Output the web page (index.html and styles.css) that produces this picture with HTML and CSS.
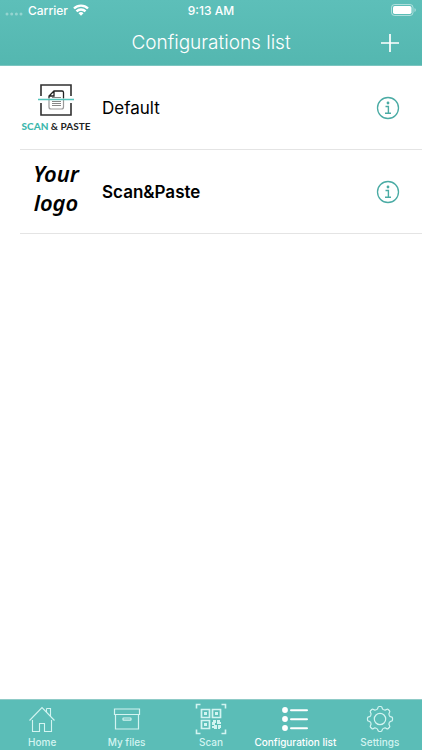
FILE: index.html
```html
<!DOCTYPE html>
<html lang="en">
<head>
<meta charset="utf-8">
<meta name="viewport" content="width=device-width, initial-scale=1">
<title>Configurations list</title>
<link rel="stylesheet" href="styles.css">
</head>
<body>
<header class="header">
  <div class="status">
    <div class="status-left">
      <svg class="signal" width="18" height="6" viewBox="0 0 18 6" aria-hidden="true"><g fill="#fff" opacity=".35"><circle cx="2" cy="2" r="1.5"/><circle cx="6.700" cy="2" r="1.5"/><circle cx="11.400" cy="2" r="1.5"/><circle cx="16" cy="2" r="1.5"/></g></svg>
      <span>Carrier</span>
      <svg width="16" height="12" viewBox="0 0 16 12" fill="none" stroke="#fff" stroke-width="2.400" aria-hidden="true"><path d="M1 4.500a10 10 0 0 1 14 0M3.500 7.400a6.400 6.400 0 0 1 9 0"/><path d="M8 11.800 5.500 9.300a3.600 3.600 0 0 1 5 0z" fill="#fff" stroke="none"/></svg>
    </div>
    <span class="time">9:13 AM</span>
    <div class="status-right">
      <svg width="26" height="12" viewBox="0 0 26 12" aria-hidden="true"><rect x=".5" y=".5" width="21.500" height="11" rx="3" fill="none" stroke="#fff" stroke-opacity=".5"/><rect x="2" y="2" width="18.500" height="8" rx="1.700" fill="#fff"/><path d="M23.500 4v4q1.300-.6 1.300-2t-1.300-2z" fill="#fff" opacity=".5"/></svg>
    </div>
  </div>
  <div class="titlebar">
    <h1>Configurations list</h1>
    <button class="add" type="button" aria-label="Add configuration">
      <svg width="20" height="20" viewBox="0 0 20 20" stroke="#fff" stroke-width="1.700" aria-hidden="true"><path d="M10 1v18M1 10h18"/></svg>
    </button>
  </div>
</header>

<main class="content">
  <ul class="list">
    <li class="row">
      <div class="logo">
        <svg width="38" height="34" viewBox="0 0 38 34" fill="none" aria-hidden="true">
          <path d="M4 13V2h30v11M4 20v12h30V20" stroke="#303030" stroke-width="1.600"/>
          <path d="M12 15v-2l5-5h8q1.500 0 1.500 1.500V15M17 8v5h-5" stroke="#222" stroke-width="1.300"/>
          <path d="M12 15v9q0 2 2 2h10.500q2 0 2-2v-9" stroke="#999" stroke-width="1.200"/>
          <path d="M15 14.500h9M15 18.500h9M15 20.500h9M15 22.500h9" stroke="#888"/>
          <path d="M1 16.500h36" stroke="#55c4bb" stroke-width="1.400"/>
        </svg>
        <span class="brand"><b>SCAN</b> &amp; PASTE</span>
      </div>
      <span class="name">Default</span>
      <button class="info" type="button" aria-label="Default details">
        <svg width="24" height="24" viewBox="0 0 24 24" fill="none" stroke="#4aaba4" aria-hidden="true"><circle cx="12" cy="12" r="10.500" stroke-width="1.300"/><circle cx="12" cy="7" r="1.400" fill="#4aaba4" stroke="none"/><path d="M9.500 10.500h2.900V17M9 17.200h6" stroke-width="1.400"/></svg>
      </button>
    </li>
    <li class="row">
      <div class="logo placeholder">Your<br>logo</div>
      <span class="name selected">Scan&amp;Paste</span>
      <button class="info" type="button" aria-label="Scan&amp;Paste details">
        <svg width="24" height="24" viewBox="0 0 24 24" fill="none" stroke="#4aaba4" aria-hidden="true"><circle cx="12" cy="12" r="10.500" stroke-width="1.300"/><circle cx="12" cy="7" r="1.400" fill="#4aaba4" stroke="none"/><path d="M9.500 10.500h2.900V17M9 17.200h6" stroke-width="1.400"/></svg>
      </button>
    </li>
  </ul>
</main>

<nav class="tabs">
  <a class="tab" href="#home">
    <svg width="32" height="32" viewBox="0 0 32 32" fill="none" stroke="currentColor" stroke-width="1.100" aria-hidden="true"><path d="M3.500 17.500 16 4.500l12.500 13M6.500 17v11.500h7V20.500h5v8h7V17M20.500 5.500h4v7.500M20.500 5.500v3.500"/></svg>
    <span>Home</span>
  </a>
  <a class="tab" href="#files">
    <svg width="32" height="32" viewBox="0 0 32 32" fill="none" stroke="currentColor" stroke-width="1.200" aria-hidden="true"><path d="M3.500 6h25v5.500h-25zM4.500 11.500V26h23V11.500"/><rect x="12" y="15" width="8" height="2.200" rx=".5"/></svg>
    <span>My files</span>
  </a>
  <a class="tab" href="#scan">
    <svg width="32" height="32" viewBox="0 0 32 32" fill="none" stroke="currentColor" aria-hidden="true"><path d="M1.500 5.500v-4h4M26.500 1.500h4v4M30.500 26.500v4h-4M5.500 30.500h-4v-4" stroke-width="1.600"/><path d="M6.500 6.500h8v8h-8zM17.500 6.500h8v8h-8zM6.500 17.500h8v8h-8z" stroke-width="1.700"/><path d="M9 9h3v3H9zM20 9h3v3h-3zM9 20h3v3H9zM18 17h3v3h-1v2h-3v-3h1zM22 17h3v2h1v2h-4zM17 23h2v-1h3v4h-3v-1h-2zM23 22h3v3h-1v1h-2z" fill="currentColor" stroke="none"/></svg>
    <span>Scan</span>
  </a>
  <a class="tab active" href="#configurations" aria-current="page">
    <svg width="32" height="32" viewBox="0 0 32 32" fill="currentColor" aria-hidden="true"><circle cx="6" cy="7" r="2.900"/><circle cx="6" cy="16" r="2.900"/><circle cx="6" cy="25" r="2.900"/><path d="M12 7.300h16M12 16.300h16M12 25.300h16" stroke="currentColor" stroke-width="2" stroke-linecap="round"/></svg>
    <span>Configuration list</span>
  </a>
  <a class="tab" href="#settings">
    <svg width="32" height="32" viewBox="-16 -16 32 32" fill="none" stroke="currentColor" stroke-width="1.200" aria-hidden="true"><defs><path id="tooth" d="M-3.800-9.200Q-2.300-9.800-2.100-11.200-1.900-12.500-.9-12.500H.9Q1.900-12.500 2.100-11.200 2.300-9.800 3.800-9.200"/></defs><circle r="5.700"/><use href="#tooth"/><use href="#tooth" transform="rotate(45)"/><use href="#tooth" transform="rotate(90)"/><use href="#tooth" transform="rotate(135)"/><use href="#tooth" transform="rotate(180)"/><use href="#tooth" transform="rotate(225)"/><use href="#tooth" transform="rotate(270)"/><use href="#tooth" transform="rotate(315)"/></svg>
    <span>Settings</span>
  </a>
</nav>
</body>
</html>
```
FILE: styles.css
```css
* {
  box-sizing: border-box;
}

body {
  margin: 0;
  min-height: 100vh;
  display: flex;
  flex-direction: column;
  background: #fff;
  color: #000;
  font-family: Inter, "Liberation Sans", sans-serif;
}

svg {
  display: block;
  flex: none;
}

button {
  padding: 0;
  border: 0;
  background: none;
  cursor: pointer;
}

.header {
  background: linear-gradient(#5dbfb9, #54b7b0);
  border-bottom: 1px solid #7cc5c0;
  color: #fff;
}

.status {
  display: grid;
  grid-template-columns: 1fr auto 1fr;
  align-items: center;
  height: 20px;
  padding: 0 5px;
  font-size: 12px;
  font-weight: 500;
}

.status-left {
  display: flex;
  align-items: center;
  gap: 5px;
}

.signal {
  align-self: end;
}

.status-right {
  justify-self: end;
}

.titlebar {
  display: grid;
  grid-template-columns: 1fr auto 1fr;
  align-items: center;
  height: 45px;
  padding: 0 22px;
}

h1 {
  grid-column: 2;
  margin: 0;
  font-size: 19px;
  font-weight: 300;
}

.add {
  justify-self: end;
}

.content {
  flex: 1;
}

.list {
  margin: 0;
  padding: 0 0 0 20px;
  list-style: none;
}

.row {
  display: flex;
  align-items: center;
  gap: 10px;
  height: 84px;
  padding-right: 22px;
  border-bottom: 1px solid #e4e4e4;
}

.logo {
  width: 72px;
  display: flex;
  flex-direction: column;
  align-items: center;
  gap: 3px;
}

.brand {
  color: #222;
  font: 700 10px/12px Lato, sans-serif;
  white-space: nowrap;
}

.brand b {
  color: #3db8ad;
}

.placeholder {
  display: block;
  padding-bottom: 8px;
  font: italic 600 22px/29px "Noto Sans", "Open Sans", sans-serif;
  text-align: center;
}

.name {
  flex: 1;
  font-size: 17px;
}

.selected {
  font-weight: 600;
}

.tabs {
  display: grid;
  grid-template-columns: repeat(5, minmax(0, 1fr));
  background: #5bbdb7;
  border-top: 1px solid #8fcbc7;
}

.tab {
  display: flex;
  flex-direction: column;
  align-items: center;
  padding-top: 3px;
  color: #d3f4f1;
  font-size: 10px;
  font-weight: 500;
  line-height: 15px;
  text-decoration: none;
  white-space: nowrap;
}

.active {
  color: #fff;
}
```
